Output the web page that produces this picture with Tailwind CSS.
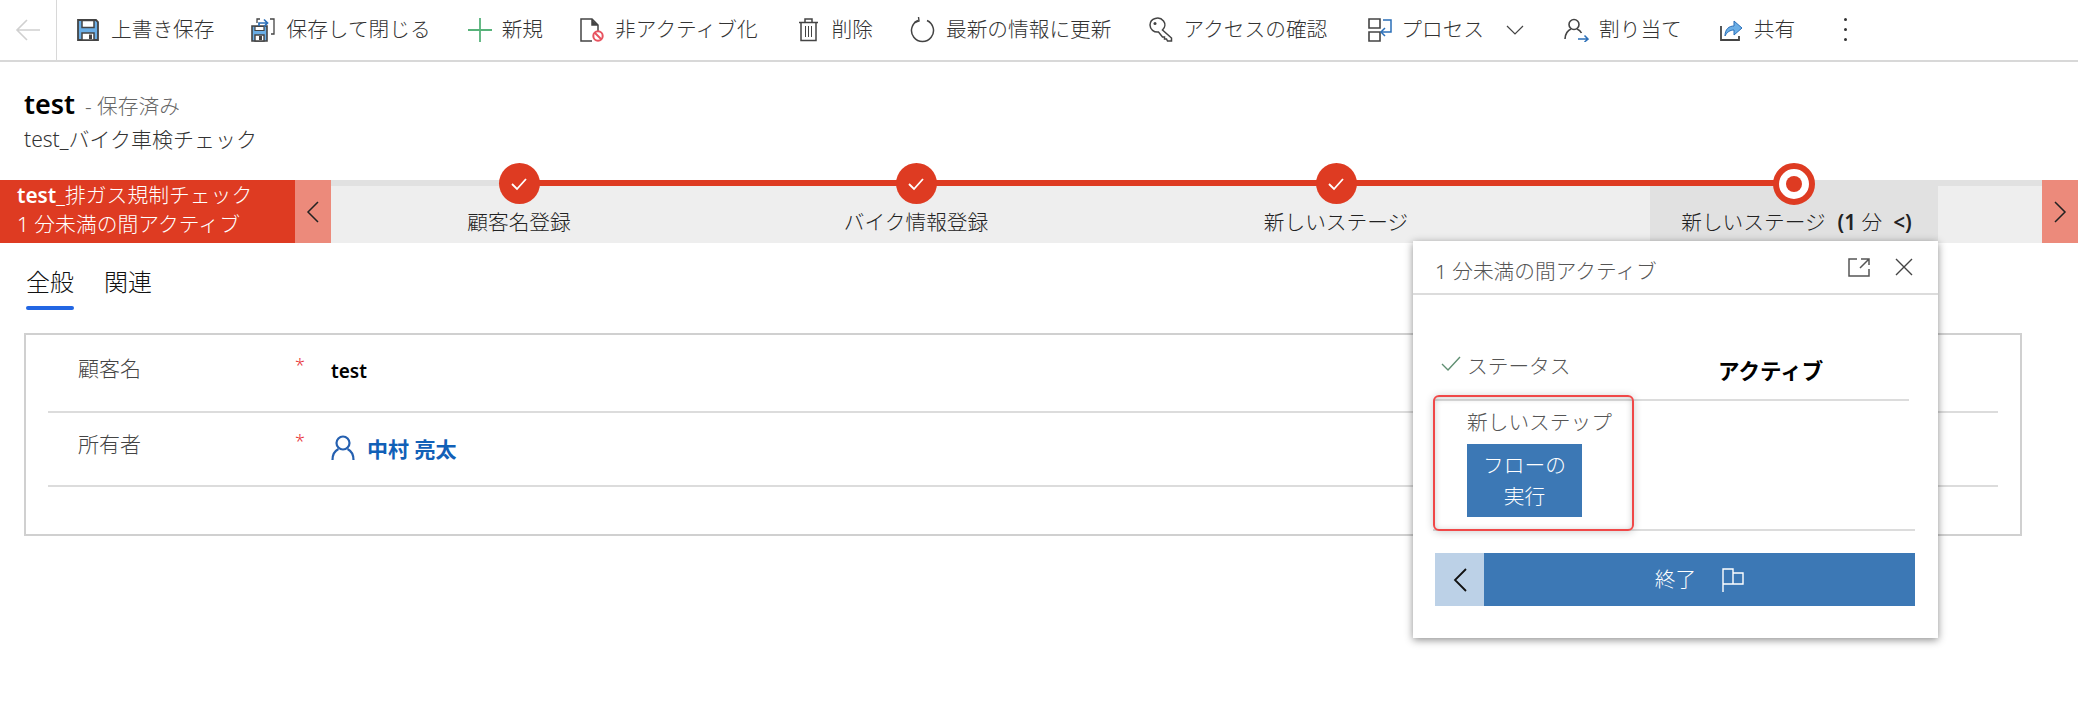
<!DOCTYPE html>
<html lang="ja">
<head>
  <meta charset="utf-8">
  <title>test</title>
  <script src="https://cdn.jsdelivr.net/npm/@tailwindcss/browser@4"></script>
</head>
<body class="bg-white font-['Noto_Sans','Noto_Sans_CJK_JP',sans-serif] font-light text-[#333] text-[20.7px] overflow-hidden">
  <div class="relative w-[2078px] h-[727px]">

    <!-- command bar -->
    <div class="flex items-center h-[62px] border-b-2 border-[#d8d8d8]">
      <div class="flex items-center justify-center w-[57px] h-full border-r border-[#d8d8d8]">
        <svg width="26" height="24" viewBox="0 0 26 24" fill="none" stroke="#d0d0d0" stroke-width="1.6"><path d="M25 12H2M12 2 2 12l10 10"/></svg>
      </div>
      <div class="flex items-center gap-[37px] pl-[20px]">
        <div class="flex items-center gap-[12px]">
          <svg width="22" height="22" viewBox="0 0 22 22"><path d="M1 1h18l2 2v18H1z" fill="#6aaee6" stroke="#444" stroke-width="1.8"/><path d="M5 1.500h12v7H5z" fill="#fff" stroke="#444" stroke-width="1.5"/><path d="M5 14h12v7H5z" fill="#fff" stroke="#444" stroke-width="1.5"/><path d="M12 15.500h3V20h-3z" fill="#444"/></svg>
          <span>上書き保存</span>
        </div>
        <div class="flex items-center gap-[11px]">
          <svg width="24" height="24" viewBox="0 0 24 24"><path d="M1 8h15v15H1z" fill="#6aaee6" stroke="#444" stroke-width="1.6"/><path d="M4 8.500h9v4H4z" fill="#fff" stroke="#444" stroke-width="1.200"/><path d="M4 17h9v6H4z" fill="#fff" stroke="#444" stroke-width="1.400"/><path d="M8 18h3v4H8z" fill="#444"/><path d="M6 5V1h3M19 1h4v15h-3" fill="none" stroke="#444" stroke-width="1.300"/><path d="M8 8V5h8M13 1.500 16.500 5 13 8.500" fill="none" stroke="#2b6fb8" stroke-width="1.700"/></svg>
          <span>保存して閉じる</span>
        </div>
        <div class="flex items-center gap-[10px]">
          <svg width="24" height="24" viewBox="0 0 24 24" stroke="#57b27a" stroke-width="1.800"><path d="M12 0v24M0 12h24"/></svg>
          <span>新規</span>
        </div>
        <div class="flex items-center gap-[11px]">
          <svg width="24" height="24" viewBox="0 0 24 24" fill="none"><path d="M12 23H1V1h11l6 6v6M12 1v6h6" stroke="#444" stroke-width="1.500"/><path d="M12 2l6 5h-6z" fill="#444"/><circle cx="18" cy="18" r="4.700" fill="#fff" stroke="#e8525f" stroke-width="2"/><path d="m15 15 6 6" stroke="#e8525f" stroke-width="2"/></svg>
          <span>非アクティブ化</span>
        </div>
        <div class="flex items-center gap-[13px] ml-[3px]">
          <svg width="21" height="24" viewBox="0 0 21 24" fill="none" stroke="#444" stroke-width="1.500"><path d="M1 4.500h19M7 4V1h7v3M3 5v17.500h15V5"/><path d="M7.500 8v11M10.500 8v11M13.500 8v11" stroke-width="1"/></svg>
          <span>削除</span>
        </div>
        <div class="flex items-center gap-[11px]">
          <svg width="25" height="26" viewBox="0 0 25 26" fill="none" stroke="#444" stroke-width="1.500"><path d="M17 3.500A11 11 0 1 1 8 3.500"/><path d="M8.500 0 9 4 4.500 5.500" stroke-width="1.400"/></svg>
          <span>最新の情報に更新</span>
        </div>
        <div class="flex items-center gap-[10px]">
          <svg width="25" height="25" viewBox="0 0 25 25" fill="none" stroke="#444" stroke-width="1.500"><path d="M1 8a7.500 7 0 0 1 13.500-4 7.500 7 0 0 1-1 9l9 8v3h-4l-1-2h-2v-2h-2l-4-5A7.500 7 0 0 1 1 8z"/><circle cx="6" cy="6.500" r="1.500" fill="#444" stroke="none"/></svg>
          <span>アクセスの確認</span>
        </div>
        <div class="flex items-center ml-[4px]">
          <svg class="mr-[9px]" width="24" height="24" viewBox="0 0 24 24" fill="none"><path d="M1 1h11v9H1zM1 14h11v9H1z" stroke="#444" stroke-width="1.600"/><path d="M15 2h8v12h-9" stroke="#2b6fb8" stroke-width="1.500"/><path d="M17 10l-4 4 4 4" stroke="#2b6fb8" stroke-width="1.500"/></svg>
          <span>プロセス</span>
          <svg class="ml-[22px]" width="18" height="10" viewBox="0 0 18 10" fill="none" stroke="#444" stroke-width="1.200"><path d="M1 1l8 8 8-8"/></svg>
        </div>
        <div class="flex items-center gap-[10px] ml-[3px]">
          <svg width="25" height="24" viewBox="0 0 25 24" fill="none"><circle cx="10" cy="6.500" r="5" stroke="#444" stroke-width="1.600"/><path d="M1 21c0-5 3-9 6-10M13 11c2 .7 3.500 2 4.500 4" stroke="#444" stroke-width="1.600"/><path d="M14 21h10M20.500 17.500 24 21l-3.500 3" stroke="#2b6fb8" stroke-width="1.500"/></svg>
          <span>割り当て</span>
        </div>
        <div class="flex items-center gap-[11px]">
          <svg width="24" height="24" viewBox="0 0 24 24" fill="none"><path d="M2 8v14h18v-4" stroke="#444" stroke-width="1.800"/><path d="M6 18c0-7 4-10 9-10V3l8 7-8 7v-5c-4 0-7 2-9 6z" fill="#6aaee6" stroke="#2b6fb8" stroke-width="1"/></svg>
          <span>共有</span>
        </div>
        <div class="flex flex-col gap-[7px] ml-[12px]">
          <i class="block w-[3px] h-[3px] bg-[#333] rounded-full"></i>
          <i class="block w-[3px] h-[3px] bg-[#333] rounded-full"></i>
          <i class="block w-[3px] h-[3px] bg-[#333] rounded-full"></i>
        </div>
      </div>
    </div>

    <!-- record header -->
    <div class="pl-[24px] pt-[24px] h-[118px]">
      <div class="flex items-baseline gap-[10px] h-[36px]">
        <span class="text-[27px] font-semibold text-black leading-[36px]">test</span>
        <span class="text-[20.7px] text-[#666]">- 保存済み</span>
      </div>
      <div class="leading-[34px] text-[21px]">test_バイク車検チェック</div>
    </div>

    <!-- process bar -->
    <div class="relative flex h-[63px]">
      <div class="w-[295px] bg-[#de3b22] text-white pl-[17px] pt-[1px] leading-[29px] text-[20.800px]">
        <div><span class="font-semibold">test</span>_排ガス規制チェック</div>
        <div>1 分未満の間アクティブ</div>
      </div>
      <div class="flex items-center justify-center w-[36px] bg-[#ec8a7b]">
        <svg width="14" height="24" viewBox="0 0 14 24" fill="none" stroke="#222" stroke-width="1.500"><path d="M12 2 2 12l10 10"/></svg>
      </div>
      <div class="relative flex-1 flex bg-[#eeeeee] border-t-[6px] border-[#e1e1e1] text-[#222]">
        <div class="absolute left-[188px] top-[-6px] w-[1275px] h-[6px] bg-[#de3b22]"></div>
        <div class="relative flex justify-center pt-[21px] w-[376px]">
          <span class="absolute top-[-23px] flex items-center justify-center w-[41px] h-[41px] rounded-full bg-[#de3b22]">
            <svg width="18" height="14" viewBox="0 0 18 14" fill="none" stroke="#fff" stroke-width="1.800"><path d="m2 7 5 5L16 2"/></svg>
          </span>
          <span>顧客名登録</span>
        </div>
        <div class="relative flex justify-center pt-[21px] w-[418px]">
          <span class="absolute top-[-23px] flex items-center justify-center w-[41px] h-[41px] rounded-full bg-[#de3b22]">
            <svg width="18" height="14" viewBox="0 0 18 14" fill="none" stroke="#fff" stroke-width="1.800"><path d="m2 7 5 5L16 2"/></svg>
          </span>
          <span>バイク情報登録</span>
        </div>
        <div class="relative flex justify-center pt-[21px] w-[422px]">
          <span class="absolute top-[-23px] flex items-center justify-center w-[41px] h-[41px] rounded-full bg-[#de3b22]">
            <svg width="18" height="14" viewBox="0 0 18 14" fill="none" stroke="#fff" stroke-width="1.800"><path d="m2 7 5 5L16 2"/></svg>
          </span>
          <span>新しいステージ</span>
        </div>
        <div class="w-[103px]"></div>
        <div class="relative flex justify-center pt-[21px] pl-[5px] w-[288px] bg-[#e1e1e1]">
          <span class="absolute left-[123px] top-[-23px] flex items-center justify-center w-[42px] h-[42px] rounded-full bg-white border-[6px] border-[#de3b22]">
            <i class="block w-[16px] h-[16px] rounded-full bg-[#de3b22]"></i>
          </span>
          <span>新しいステージ<b class="font-semibold ml-[12px]">(1 </b><span>分</span><b class="font-semibold ml-[11px]">&lt;)</b></span>
        </div>
      </div>
      <div class="flex items-center justify-center w-[36px] bg-[#ec8a7b]">
        <svg width="14" height="24" viewBox="0 0 14 24" fill="none" stroke="#222" stroke-width="1.500"><path d="m2 2 10 10L2 22"/></svg>
      </div>
    </div>

    <!-- tabs -->
    <div class="flex gap-[30px] pl-[26px] pt-[17px] h-[90px] text-[24px] text-[#111]">
      <div>
        <div class="leading-[44px]">全般</div>
        <div class="h-[4px] mt-[2px] rounded-full bg-[#2266e3]"></div>
      </div>
      <div class="leading-[44px]">関連</div>
    </div>

    <!-- form card -->
    <div class="ml-[24px] w-[1998px] h-[203px] border-2 border-[#d0d0d0] px-[22px]">
      <div class="flex h-[78px] border-b-2 border-[#dcdcdc]">
        <div class="w-[247px] pl-[30px] pt-[18px] text-[#444] text-[21px]">顧客名</div>
        <div class="w-[36px] pt-[17px] text-[#e8343a] text-[18px]">*</div>
        <div class="pt-[22px] font-semibold text-black text-[19px]">test</div>
      </div>
      <div class="flex h-[74px] border-b-2 border-[#dcdcdc]">
        <div class="w-[247px] pl-[30px] pt-[16px] text-[#444] text-[21px]">所有者</div>
        <div class="w-[36px] pt-[15px] text-[#e8343a] text-[18px]">*</div>
        <div class="flex items-start gap-[12px] pt-[22px]">
          <svg width="24" height="26" viewBox="0 0 24 26" fill="none" stroke="#2560b0" stroke-width="2.200"><circle cx="12" cy="8" r="6.500"/><path d="M1.500 25c0-6 3-9.500 6-11M22.500 25c0-6-3-9.500-6-11"/></svg>
          <span class="font-bold text-[#1160b7] text-[21px] -mt-[1px]">中村 亮太</span>
        </div>
      </div>
    </div>

    <!-- stage flyout -->
    <div class="absolute left-[1413px] top-[241px] w-[525px] h-[397px] bg-white shadow-[0_2px_8px_rgba(0,0,0,0.45)]">
      <div class="flex items-center h-[54px] pl-[22px] pr-[25px] border-b-2 border-[#dcdcdc] text-[#555]">
        <span class="flex-1 pt-[9px]">1 分未満の間アクティブ</span>
        <svg class="mr-[25px]" width="22" height="19" viewBox="0 0 22 19" fill="none" stroke="#555" stroke-width="1.500"><path d="M9 1H1v17h20v-7M13 1h8v6M21 1l-9 9"/></svg>
        <svg width="18" height="18" viewBox="0 0 18 18" fill="none" stroke="#444" stroke-width="1.400"><path d="m1 1 16 16M17 1 1 17"/></svg>
      </div>
      <div class="ml-[20px] mr-[29px] h-[106px] flex border-b-2 border-[#dcdcdc]">
        <div class="w-[285px] flex items-start gap-[6px] pt-[57px] pl-[8px]">
          <svg class="mt-[4px]" width="20" height="15" viewBox="0 0 20 15" fill="none" stroke="#5f8f72" stroke-width="1.400"><path d="m1 8 6 6L19 1"/></svg>
          <span class="text-[#555] leading-[28px]">ステータス</span>
        </div>
        <div class="pt-[62px] font-bold text-black text-[21.5px] leading-[28px]">アクティブ</div>
      </div>
      <div class="ml-[20px] mr-[23px] h-[130px] border-b-2 border-[#dcdcdc] pl-[34px] pt-[7px]">
        <div class="leading-[28px] text-[#555]">新しいステップ</div>
        <div class="mt-[8px] w-[115px] h-[73px] bg-[#3c78b5] text-white text-center pt-[6px] leading-[31px]">フローの<br>実行</div>
      </div>
      <div class="flex ml-[22px] mr-[23px] mt-[22px] h-[53px]">
        <div class="flex items-center justify-center w-[49px] bg-[#bcd1e7]">
          <svg width="16" height="26" viewBox="0 0 16 26" fill="none" stroke="#111" stroke-width="1.800"><path d="M14 2 3 13l11 11"/></svg>
        </div>
        <div class="flex-1 flex items-center justify-center gap-[26px] bg-[#3c78b5] text-white">
          <span>終了</span>
          <svg width="22" height="24" viewBox="0 0 22 24" fill="none" stroke="#fff" stroke-width="1.400"><path d="M1 24V1h10v15H1M11 5h10v11H11"/></svg>
        </div>
      </div>
    </div>

    <!-- annotation box drawn on top of the flyout -->
    <div class="absolute left-[1433px] top-[395px] w-[201px] h-[136px] rounded-[6px] border-2 border-[#f04848] shadow-[0_1px_8px_rgba(0,0,0,0.2),inset_0_1px_6px_rgba(0,0,0,0.2)]"></div>
  </div>
</body>
</html>
